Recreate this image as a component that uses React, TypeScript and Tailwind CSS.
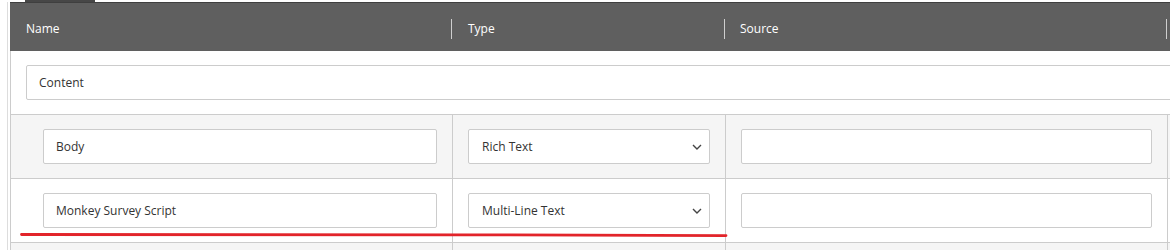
import React from "react";

const Chevron = () => (
  <svg width="10" height="6" viewBox="0 0 10 6" className="shrink-0">
    <path d="M1 1 L5 5 L9 1" fill="none" stroke="#444" strokeWidth="1.4" />
  </svg>
);

const TextBox = ({ value = "", className = "" }: { value?: string; className?: string }) => (
  <div
    className={`h-[35px] flex items-center pl-[12px] bg-white border border-[#cccccc] rounded-[2px] text-[12px] text-[#333] ${className}`}
  >
    <span>{value}</span>
  </div>
);

const SelectBox = ({ value }: { value: string }) => (
  <div className="h-[35px] flex items-center justify-between pl-[13px] pr-[7px] bg-white border border-[#cccccc] rounded-[2px] text-[12px] text-[#333]">
    <span>{value}</span>
    <Chevron />
  </div>
);

const FieldRow = ({ name, type, bg }: { name: string; type: string; bg: string }) => (
  <div className={`flex h-[64px] border-b border-[#cccccc] ${bg}`}>
    <div className="w-[442px] shrink-0 border-r border-[#cccccc] pl-[32px] pr-[15px] pt-[14px]">
      <TextBox value={name} />
    </div>
    <div className="w-[273px] shrink-0 border-r border-[#cccccc] px-[15px] pt-[14px]">
      <SelectBox value={type} />
    </div>
    <div className="w-[442px] shrink-0 border-r border-[#cccccc] pl-[15px] pr-[15px] pt-[14px]">
      <TextBox />
    </div>
    <div className="flex-1" />
  </div>
);

export default function App() {
  return (
    <div
      className="relative w-[1170px] h-[250px] overflow-hidden bg-white"
      style={{ fontFamily: '"Open Sans", "Liberation Sans", sans-serif' }}
    >
      {/* tab stub at the top */}
      <div className="h-[2px] flex">
        <div className="w-[25px]" />
        <div className="w-[70px] bg-[#474747]" />
      </div>

      <div className="flex pl-[7px]">
        <div className="border-l border-[#dddddd] pl-[2px] w-full">
          <div className="w-[1300px]">
            {/* header */}
            <div className="flex h-[49px] bg-[#5f5f5f] border-t border-[#3f3f3f] text-white text-[12px]">
              <div className="w-[441px] shrink-0 flex items-center pl-[16px] pt-[3px]">Name</div>
              <div className="w-px h-[20px] self-center bg-[#cfcfcf] mt-[3px]" />
              <div className="w-[272px] shrink-0 flex items-center pl-[16px] pt-[3px]">Type</div>
              <div className="w-px h-[20px] self-center bg-[#cfcfcf] mt-[3px]" />
              <div className="w-[441px] shrink-0 flex items-center pl-[15px] pt-[3px]">Source</div>
              <div className="w-px h-[20px] self-center bg-[#cfcfcf] mt-[3px]" />
            </div>

            <div className="border-l border-[#cccccc]">
              {/* section row */}
              <div className="h-[64px] border-b border-[#cccccc] bg-white pl-[15px] pt-[14px]">
                <TextBox value="Content" className="w-[1250px]" />
              </div>

              <FieldRow name="Body" type="Rich Text" bg="bg-[#f5f5f5]" />
              <FieldRow name="Monkey Survey Script" type="Multi-Line Text" bg="bg-white" />
              <div className="h-[20px] bg-[#f5f5f5] flex">
                <div className="w-[442px] border-r border-[#cccccc]" />
                <div className="w-[273px] border-r border-[#cccccc]" />
                <div className="w-[442px] border-r border-[#cccccc]" />
              </div>
            </div>
          </div>
        </div>
      </div>

      {/* red annotation underline */}
      <svg className="absolute left-0 top-0 pointer-events-none" width="1170" height="250">
        <path d="M21.5 234.5 L470 234.8 L726 235.6" fill="none" stroke="#e2242a" strokeWidth="2.8" strokeLinecap="round" />
      </svg>
    </div>
  );
}
